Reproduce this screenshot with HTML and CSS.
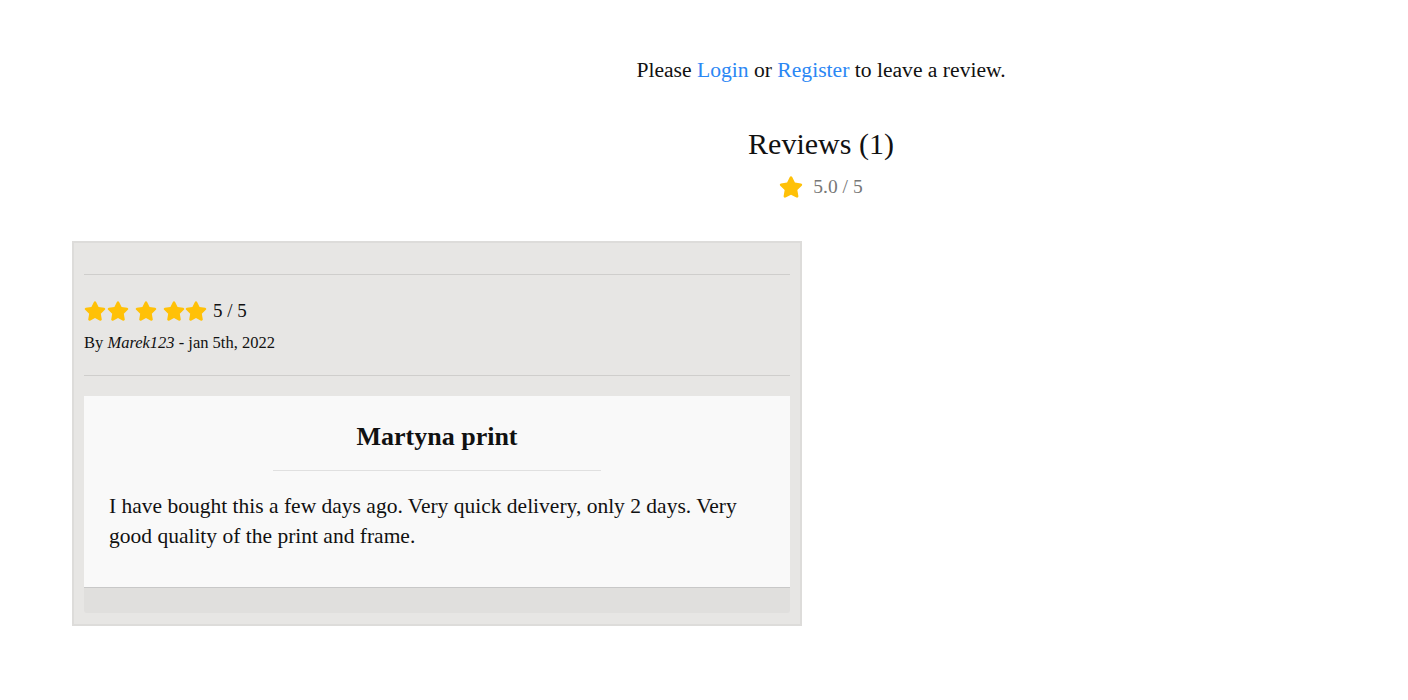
FILE: index.html
```html
<!DOCTYPE html>
<html lang="en">
<head>
<meta charset="utf-8">
<title>Reviews</title>
<link rel="stylesheet" href="styles.css">
</head>
<body>
<section class="summary">
  <p class="login-note">Please <a href="#">Login</a> or <a href="#">Register</a> to leave a review.</p>
  <h2 class="reviews-title">Reviews (1)</h2>
  <div class="avg">
    <svg class="star star-lg" viewBox="0 0 576 512"><path d="M259.3 17.8L194 150.2 47.9 171.5c-26.2 3.8-36.7 36.1-17.7 54.6l105.7 103-25 145.5c-4.5 26.3 23.2 46 46.4 33.7L288 439.6l130.7 68.7c23.2 12.2 50.9-7.4 46.4-33.7l-25-145.5 105.7-103c19-18.5 8.5-50.8-17.7-54.6L382 150.2 316.7 17.8c-11.7-23.6-45.6-23.9-57.4 0z"/></svg>
    <span class="avg-text">5.0 / 5</span>
  </div>
</section>

<section class="list">
  <article class="review">
    <hr class="rule">
    <div class="meta">
      <div class="rating">
        <svg class="star" viewBox="0 0 576 512"><path d="M259.3 17.8L194 150.2 47.9 171.5c-26.2 3.8-36.7 36.1-17.7 54.6l105.7 103-25 145.5c-4.5 26.3 23.2 46 46.4 33.7L288 439.6l130.7 68.7c23.2 12.2 50.9-7.4 46.4-33.7l-25-145.5 105.7-103c19-18.5 8.5-50.8-17.7-54.6L382 150.2 316.7 17.8c-11.7-23.6-45.6-23.9-57.4 0z"/></svg>
        <svg class="star s2" viewBox="0 0 576 512"><path d="M259.3 17.8L194 150.2 47.9 171.5c-26.2 3.8-36.7 36.1-17.7 54.6l105.7 103-25 145.5c-4.5 26.3 23.2 46 46.4 33.7L288 439.6l130.7 68.7c23.2 12.2 50.9-7.4 46.4-33.7l-25-145.5 105.7-103c19-18.5 8.5-50.8-17.7-54.6L382 150.2 316.7 17.8c-11.7-23.6-45.6-23.9-57.4 0z"/></svg>
        <svg class="star s3" viewBox="0 0 576 512"><path d="M259.3 17.8L194 150.2 47.9 171.5c-26.2 3.8-36.7 36.1-17.7 54.6l105.7 103-25 145.5c-4.5 26.3 23.2 46 46.4 33.7L288 439.6l130.7 68.7c23.2 12.2 50.9-7.4 46.4-33.7l-25-145.5 105.7-103c19-18.5 8.5-50.8-17.7-54.6L382 150.2 316.7 17.8c-11.7-23.6-45.6-23.9-57.4 0z"/></svg>
        <svg class="star s4" viewBox="0 0 576 512"><path d="M259.3 17.8L194 150.2 47.9 171.5c-26.2 3.8-36.7 36.1-17.7 54.6l105.7 103-25 145.5c-4.5 26.3 23.2 46 46.4 33.7L288 439.6l130.7 68.7c23.2 12.2 50.9-7.4 46.4-33.7l-25-145.5 105.7-103c19-18.5 8.5-50.8-17.7-54.6L382 150.2 316.7 17.8c-11.7-23.6-45.6-23.9-57.4 0z"/></svg>
        <svg class="star s5" viewBox="0 0 576 512"><path d="M259.3 17.8L194 150.2 47.9 171.5c-26.2 3.8-36.7 36.1-17.7 54.6l105.7 103-25 145.5c-4.5 26.3 23.2 46 46.4 33.7L288 439.6l130.7 68.7c23.2 12.2 50.9-7.4 46.4-33.7l-25-145.5 105.7-103c19-18.5 8.5-50.8-17.7-54.6L382 150.2 316.7 17.8c-11.7-23.6-45.6-23.9-57.4 0z"/></svg>
        <span class="score">5 / 5</span>
      </div>
      <p class="by">By <em>Marek123</em> - jan 5th, 2022</p>
    </div>
    <hr class="rule">
    <div class="body">
      <h3 class="review-title">Martyna print</h3>
      <hr class="title-rule">
      <p class="review-text">I have bought this a few days ago. Very quick delivery, only 2 days. Very good quality of the print and frame.</p>
    </div>
    <div class="foot"></div>
  </article>
</section>
</body>
</html>
```

FILE: styles.css
```css
html, body {
  margin: 0;
  padding: 0;
  background: #ffffff;
}

body {
  font-family: "Liberation Serif", "DejaVu Serif", serif;
  color: #111111;
}

.summary {
  padding: 56px 0 0 234px;
  text-align: center;
}

.login-note {
  margin: 0;
  font-size: 21.6px;
  line-height: 28px;
}

.login-note a {
  color: #2b87f4;
  text-decoration: none;
}

.reviews-title {
  margin: 42px 0 0;
  font-size: 30px;
  font-weight: 400;
  line-height: 36px;
}

.avg {
  margin-top: 11px;
  display: flex;
  justify-content: center;
  align-items: center;
  gap: 10px;
  height: 28px;
}

.avg-text {
  font-size: 19.5px;
  color: #777777;
}

.star {
  width: 22px;
  height: 20px;
  fill: #ffc107;
  display: block;
}

.star-lg {
  width: 24px;
  height: 22px;
}

.list {
  padding: 40px 0 0 72px;
}

.review {
  width: 706px;
  background: #e7e6e4;
  border: 2px solid #dddcda;
  padding: 31px 10px 11px;
}

.rule {
  margin: 0;
  border: 0;
  border-top: 1px solid #cfcecc;
}

.meta {
  padding: 23px 0 22px;
}

.rating {
  display: flex;
  align-items: center;
  height: 26px;
}

.rating .s2 { margin-left: 1px; }
.rating .s3 { margin-left: 6px; }
.rating .s4 { margin-left: 6px; }
.rating .s5 { margin-left: 0; }

.score {
  margin-left: 6px;
  font-size: 19px;
  line-height: 26px;
}

.by {
  margin: 9px 0 0;
  font-size: 16.5px;
  line-height: 20px;
}

.body {
  margin-top: 20px;
  background: #f9f9f9;
  padding: 24px 25px 36px;
}

.review-title {
  margin: 0;
  text-align: center;
  font-size: 26px;
  font-weight: 700;
  line-height: 34px;
}

.title-rule {
  width: 328px;
  margin: 16px auto 20px;
  border: 0;
  border-top: 1px solid #e0e0e0;
}

.review-text {
  margin: 0;
  font-size: 21.5px;
  line-height: 30px;
}

.foot {
  height: 25px;
  background: #e0dfdd;
  border-top: 1px solid #c8c8c8;
  border-radius: 0 0 3px 3px;
}
```
